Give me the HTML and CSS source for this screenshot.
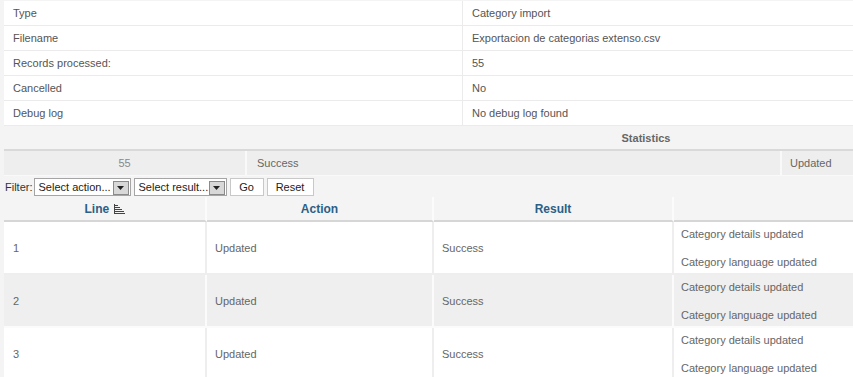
FILE: index.html
```html
<!DOCTYPE html>
<html>
<head>
<meta charset="utf-8">
<link rel="stylesheet" href="styles.css">
</head>
<body>
<div class="wrap">
  <table class="info">
    <tr><td class="k">Type</td><td class="v">Category import</td></tr>
    <tr><td class="k">Filename</td><td class="v">Exportacion de categorias extenso.csv</td></tr>
    <tr><td class="k">Records processed:</td><td class="v">55</td></tr>
    <tr><td class="k">Cancelled</td><td class="v">No</td></tr>
    <tr><td class="k">Debug log</td><td class="v">No debug log found</td></tr>
  </table>

  <table class="stats">
    <tr><th colspan="3">Statistics</th></tr>
    <tr><td class="num">55</td><td class="res">Success</td><td class="act">Updated</td></tr>
  </table>

  <div class="filter">
    <span class="flabel">Filter:</span>
    <span class="sel sel1"><span class="seltext">Select action...</span><span class="arrow"><svg width="7" height="4" viewBox="0 0 7 4"><path d="M0 0h7L3.5 4z" fill="#222"/></svg></span></span>
    <span class="sel sel2"><span class="seltext">Select result...</span><span class="arrow"><svg width="7" height="4" viewBox="0 0 7 4"><path d="M0 0h7L3.5 4z" fill="#222"/></svg></span></span>
    <button class="btn go">Go</button>
    <button class="btn reset">Reset</button>
  </div>

  <table class="results">
    <thead>
      <tr>
        <th class="c1">Line <svg class="sort" width="11" height="10" viewBox="0 0 11 10"><g fill="#444"><rect x="0" y="0" width="1" height="10"/><rect x="1" y="1" width="3" height="1"/><rect x="1" y="3" width="5" height="1"/><rect x="1" y="5" width="7" height="1"/><rect x="1" y="7" width="9" height="1"/><rect x="0" y="9" width="11" height="1"/></g></svg></th>
        <th class="c2">Action</th>
        <th class="c3">Result</th>
        <th class="c4"></th>
      </tr>
    </thead>
    <tbody>
      <tr class="odd">
        <td class="c1">1</td><td class="c2">Updated</td><td class="c3">Success</td>
        <td class="c4"><div class="msg">Category details updated</div><div class="msg second">Category language updated</div></td>
      </tr>
      <tr class="even">
        <td class="c1">2</td><td class="c2">Updated</td><td class="c3">Success</td>
        <td class="c4"><div class="msg">Category details updated</div><div class="msg second">Category language updated</div></td>
      </tr>
      <tr class="odd">
        <td class="c1">3</td><td class="c2">Updated</td><td class="c3">Success</td>
        <td class="c4"><div class="msg">Category details updated</div><div class="msg second">Category language updated</div></td>
      </tr>
    </tbody>
  </table>
</div>
</body>
</html>
```

FILE: styles.css
```css
html, body {
  margin: 0;
  padding: 0;
  background: #f4f4f4;
  overflow: hidden;
}
body {
  font-family: "Liberation Sans", Arial, sans-serif;
  font-size: 11px;
  color: #555;
}
.wrap {
  width: 1284px;
  padding: 1px 0 0 4px;
}
table {
  border-collapse: collapse;
  border-spacing: 0;
  width: 100%;
}
td, th {
  padding: 0;
}

/* info table */
.info td {
  height: 24px;
  background: #fff;
  border-bottom: 1px solid #ebebeb;
  vertical-align: middle;
}
.info .k {
  width: 449px;
  padding-left: 9px;
  border-right: 1px solid #ebebeb;
}
.info .v {
  padding-left: 9px;
}

/* statistics */
.stats th {
  height: 23px;
  font-weight: bold;
  color: #666;
  text-align: center;
  border-bottom: 2px solid #d9d9d9;
  background: #f4f4f4;
}
.stats td {
  height: 24px;
  background: #eeeeee;
  border-right: 2px solid #f9f9f9;
  border-bottom: 1px solid #f9f9f9;
  vertical-align: middle;
  color: #666;
}
.stats .num {
  width: 241px;
  text-align: center;
  color: #888;
}
.stats .res {
  width: 523px;
  padding-left: 10px;
}
.stats .act {
  padding-left: 8px;
  border-right: none;
}

/* filter */
.filter {
  display: flex;
  align-items: center;
  gap: 3px;
  height: 20px;
  margin-top: 1px;
  padding-left: 1px;
}
.flabel {
  color: #333;
  margin-right: -2px;
}
.sel {
  display: flex;
  align-items: center;
  justify-content: space-between;
  height: 16px;
  background: #fff;
  border: 1px solid #a5a5a5;
  color: #222;
  padding-left: 4px;
  padding-right: 1px;
  box-sizing: content-box;
}
.sel1 { width: 90px; }
.sel2 { width: 86px; }
.arrow {
  display: flex;
  align-items: center;
  justify-content: center;
  width: 14px;
  height: 12px;
  background: #d8d8d8;
  border: 1px solid #8a8a8a;
  margin-top: 1px;
}
.btn {
  font-family: "Liberation Sans", Arial, sans-serif;
  font-size: 11px;
  color: #222;
  height: 18px;
  background: #fff;
  border: 1px solid #c8c8c8;
  padding: 0;
  margin: 0;
}
.go { width: 34px; }
.reset { width: 47px; }

/* results */
.results {
  border-collapse: separate;
}
.results th {
  height: 23px;
  font-weight: bold;
  font-size: 12px;
  color: #2b5f86;
  text-align: center;
  background: #f4f4f4;
  border-right: 2px solid #fbfbfb;
  border-bottom: 2px solid #d6d6d6;
  vertical-align: middle;
}
.results th.c4 { border-right: none; }
.sort {
  vertical-align: -1px;
  margin-left: 1px;
}
.results td {
  height: 51px;
  vertical-align: middle;
  padding-left: 8px;
  border-right: 2px solid #eeeeee;
  border-bottom: 2px solid #eeeeee;
  color: #666;
}
.results td.c4 { border-right: none; }
.results .c1 { width: 203px; box-sizing: border-box; }
.results td.c1 { padding-left: 9px; color: #666; }
.results .c2 { width: 227px; box-sizing: border-box; }
.results .c3 { width: 240px; box-sizing: border-box; }
.results tr.odd td {
  background: #fff;
}
.results tr.even td {
  background: #efefef;
  border-color: #fbfbfb;
}
.results td.c4 {
  vertical-align: top;
  padding-left: 7px;
}
.msg {
  line-height: 14px;
  margin-top: 5px;
}
.msg.second {
  margin-top: 14px;
}
```
